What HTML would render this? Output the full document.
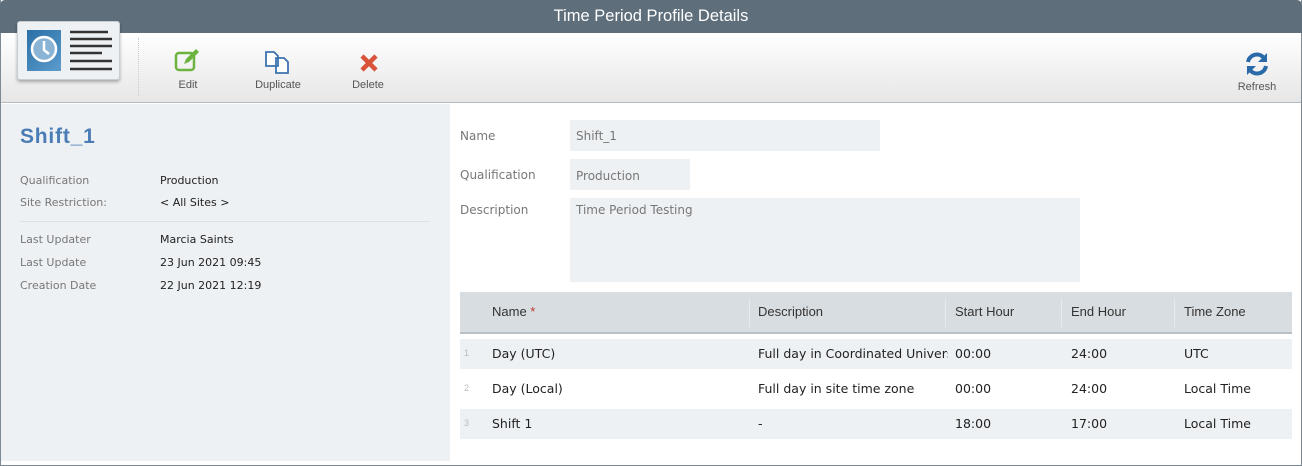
<!DOCTYPE html>
<html><head><style>
*{margin:0;padding:0;box-sizing:border-box}
body{width:1302px;height:466px;overflow:hidden;font-family:"Liberation Sans",sans-serif;background:#fff;position:relative}
.abs{position:absolute}
.lbl{font-size:11px;color:#777;font-family:"DejaVu Sans",sans-serif}
.val{font-size:11px;color:#222;font-family:"DejaVu Sans",sans-serif}
.tb{font-size:11px;color:#555;text-align:center;width:80px}
.cell{font-size:12.5px;color:#222;font-family:"DejaVu Sans",sans-serif}
.hd{font-size:13px;color:#333}
</style></head><body>
<div class="abs" style="left:0;top:0;width:1302px;height:466px;border:1px solid #7d8a94;border-top:none"></div>
<div class="abs" style="left:0;top:0;width:1302px;height:33px;background:#5e6e7b;border-radius:5px 5px 0 0;color:#fff;font-size:16.5px;text-align:center;line-height:33px">Time Period Profile Details</div>
<div class="abs" style="left:1px;top:33px;width:1300px;height:70px;background:linear-gradient(#fff,#e6e6e6);border-bottom:1px solid #b5bcc2"></div>
<div class="abs" style="left:138px;top:38px;width:1px;height:58px;border-left:1px dotted #ccc"></div>
<div class="abs" style="left:17px;top:21px;width:103px;height:59px;background:#eef1f4;border:1px solid #c8cdd2;border-radius:3px;box-shadow:0 2px 3px rgba(0,0,0,.3)"></div>
<div class="abs" style="left:27px;top:30px;width:34px;height:41px;background:linear-gradient(135deg,#2a6fa6,#5b9ccc)"></div>
<svg class="abs" style="left:27px;top:30px" width="90" height="42"><circle cx="17" cy="19" r="12" fill="#8bb4d4" stroke="#fff" stroke-width="2.5"/><path d="M17 11v9l5 4" stroke="#fff" stroke-width="2.5" fill="none"/>
<g stroke="#333" stroke-width="2.6"><path d="M43 2h38M43 9h42M43 16h42M43 23h32M43 31h42M43 39h42"/></g></svg>
<svg class="abs" style="left:174px;top:48px" width="28" height="26"><rect x="2" y="5" width="18" height="17" rx="3" fill="none" stroke="#6cb33f" stroke-width="2.5"/><path d="M10 16l2-5 10-10 3 3-10 10z" fill="#6cb33f"/></svg>
<div class="abs tb" style="left:148px;top:79px">Edit</div>
<svg class="abs" style="left:264px;top:48px" width="28" height="28"><path d="M2 4h8l4 4v10h-12z M12 10h8l4 4v11h-12z" fill="#fff" stroke="#3c72b0" stroke-width="1.8"/></svg>
<div class="abs tb" style="left:238px;top:79px">Duplicate</div>
<svg class="abs" style="left:359px;top:53px" width="20" height="20"><path d="M3 3l14 14M17 3L3 17" stroke="#d9533a" stroke-width="4.5"/></svg>
<div class="abs tb" style="left:328px;top:79px">Delete</div>
<svg class="abs" style="left:1244px;top:51px" width="26" height="26"><path d="M4 11a9 9 0 0 1 16-4" stroke="#2b6aa8" stroke-width="4" fill="none"/><path d="M23 2v9h-9z" fill="#2b6aa8"/><path d="M22 15a9 9 0 0 1-16 4" stroke="#2b6aa8" stroke-width="4" fill="none"/><path d="M3 24v-9h9z" fill="#2b6aa8"/></svg>
<div class="abs tb" style="left:1217px;top:81px">Refresh</div>
<div class="abs" style="left:1px;top:104px;width:449px;height:357px;background:#eef1f4"></div>
<div class="abs" style="left:20px;top:125px;font-size:21px;font-weight:bold;color:#4a7cb5;letter-spacing:0.8px">Shift_1</div>
<div class="abs lbl" style="left:20px;top:174px">Qualification</div><div class="abs val" style="left:160px;top:174px">Production</div>
<div class="abs lbl" style="left:20px;top:196px">Site Restriction:</div><div class="abs val" style="left:160px;top:196px">&lt; All Sites &gt;</div>
<div class="abs" style="left:20px;top:221px;width:410px;height:1px;background:#dde1e5"></div>
<div class="abs lbl" style="left:20px;top:233px">Last Updater</div><div class="abs val" style="left:160px;top:233px">Marcia Saints</div>
<div class="abs lbl" style="left:20px;top:256px">Last Update</div><div class="abs val" style="left:160px;top:256px">23 Jun 2021 09:45</div>
<div class="abs lbl" style="left:20px;top:279px">Creation Date</div><div class="abs val" style="left:160px;top:279px">22 Jun 2021 12:19</div>
<div class="abs lbl" style="left:460px;top:129px;font-size:12px">Name</div>
<div class="abs" style="left:570px;top:120px;width:310px;height:31px;background:#eef1f4"></div><div class="abs lbl" style="left:576px;top:129px;font-size:12px">Shift_1</div>
<div class="abs lbl" style="left:460px;top:168px;font-size:12px">Qualification</div>
<div class="abs" style="left:570px;top:159px;width:120px;height:31px;background:#eef1f4"></div><div class="abs lbl" style="left:576px;top:169px;font-size:12px">Production</div>
<div class="abs lbl" style="left:460px;top:203px;font-size:12px">Description</div>
<div class="abs" style="left:570px;top:198px;width:510px;height:84px;background:#eef1f4"></div><div class="abs lbl" style="left:576px;top:203px;font-size:12px">Time Period Testing</div>
<div class="abs" style="left:460px;top:292px;width:832px;height:42px;background:#d8dde1;border-bottom:2px solid #b9c0c6"></div>
<div class="abs" style="left:749px;top:299px;width:1px;height:28px;background:#e8ebee"></div>
<div class="abs" style="left:945px;top:299px;width:1px;height:28px;background:#e8ebee"></div>
<div class="abs" style="left:1061px;top:299px;width:1px;height:28px;background:#e8ebee"></div>
<div class="abs" style="left:1174px;top:299px;width:1px;height:28px;background:#e8ebee"></div>
<div class="abs hd" style="left:492px;top:304px">Name <span style="color:#c0392b">*</span></div>
<div class="abs hd" style="left:758px;top:304px">Description</div>
<div class="abs hd" style="left:955px;top:304px">Start Hour</div>
<div class="abs hd" style="left:1071px;top:304px">End Hour</div>
<div class="abs hd" style="left:1184px;top:304px">Time Zone</div>
<div class="abs" style="left:460px;top:339px;width:832px;height:30px;background:#eef1f4"></div>
<div class="abs" style="left:460px;top:409px;width:832px;height:30px;background:#eef1f4"></div>
<div class="abs" style="left:464px;top:348px;font-size:9px;color:#bbb">1</div>
<div class="abs" style="left:464px;top:383px;font-size:9px;color:#bbb">2</div>
<div class="abs" style="left:464px;top:418px;font-size:9px;color:#bbb">3</div>
<div class="abs cell" style="left:492px;top:346px">Day (UTC)</div><div class="abs cell" style="left:758px;top:346px;width:190px;overflow:hidden;white-space:nowrap">Full day in Coordinated Universal</div><div class="abs cell" style="left:955px;top:346px">00:00</div><div class="abs cell" style="left:1071px;top:346px">24:00</div><div class="abs cell" style="left:1184px;top:346px">UTC</div>
<div class="abs cell" style="left:492px;top:381px">Day (Local)</div><div class="abs cell" style="left:758px;top:381px">Full day in site time zone</div><div class="abs cell" style="left:955px;top:381px">00:00</div><div class="abs cell" style="left:1071px;top:381px">24:00</div><div class="abs cell" style="left:1184px;top:381px">Local Time</div>
<div class="abs cell" style="left:492px;top:416px">Shift 1</div><div class="abs cell" style="left:758px;top:416px">-</div><div class="abs cell" style="left:955px;top:416px">18:00</div><div class="abs cell" style="left:1071px;top:416px">17:00</div><div class="abs cell" style="left:1184px;top:416px">Local Time</div>
</body></html>
